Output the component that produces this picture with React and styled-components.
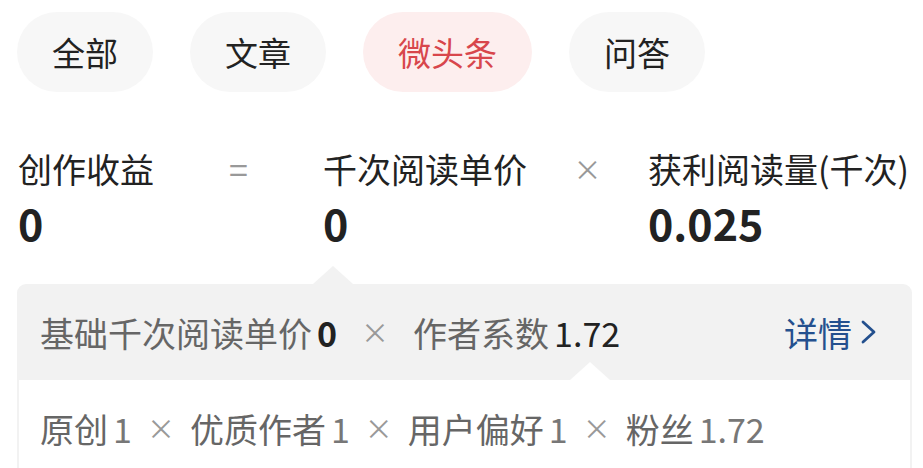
import React from 'react';
import styled, { createGlobalStyle } from 'styled-components';

const GlobalStyle = createGlobalStyle`
  html, body {
    margin: 0;
    padding: 0;
    background: #fff;
    overflow: hidden;
  }
  body {
    font-family: "Noto Sans CJK SC", "Noto Sans", sans-serif;
    color: #222;
  }
`;

const tabs = [
  { key: 'all', label: '全部' },
  { key: 'article', label: '文章' },
  { key: 'weitoutiao', label: '微头条' },
  { key: 'qa', label: '问答' },
];

const factors = [
  { name: '原创', value: '1' },
  { name: '优质作者', value: '1' },
  { name: '用户偏好', value: '1' },
  { name: '粉丝', value: '1.72' },
];

const App = () => {
  const active = 'weitoutiao';

  return (
    <>
      <GlobalStyle />
      <Page>
        <TabBar>
          {tabs.map(tab => (
            <Tab key={tab.key} active={tab.key === active}>
              {tab.label}
            </Tab>
          ))}
        </TabBar>

        <Formula>
          <Term>
            <Label>创作收益</Label>
            <Value>0</Value>
          </Term>
          <Operator width={169}>=</Operator>
          <Term>
            <Label>千次阅读单价</Label>
            <Value>0</Value>
          </Term>
          <Operator width={121} small>×</Operator>
          <Term>
            <Label>获利阅读量(千次)</Label>
            <Value>0.025</Value>
          </Term>
        </Formula>

        <Breakdown>
          <Caret left={296} color="#f2f2f2" />
          <BaseRow>
            <Line>
              基础千次阅读单价<Num strong>0</Num>
              <Times>×</Times>
              作者系数<Num dark>1.72</Num>
            </Line>
            <Detail>
              详情
              <svg width="22" height="30" viewBox="0 0 22 30">
                <polyline
                  points="5,5 16,15 5,25"
                  fill="none"
                  stroke="currentColor"
                  strokeWidth="2.8"
                  strokeLinecap="round"
                  strokeLinejoin="round"
                />
              </svg>
            </Detail>
          </BaseRow>
          <FactorPanel>
            <Caret left={551} color="#fff" />
            <Line>
              {factors.map((f, i) => (
                <React.Fragment key={f.name}>
                  {i > 0 && <Times small>×</Times>}
                  {f.name}
                  <Num>{f.value}</Num>
                </React.Fragment>
              ))}
            </Line>
          </FactorPanel>
        </Breakdown>
      </Page>
    </>
  );
};

const Page = styled.div`
  width: 923px;
  height: 468px;
  padding: 12px 0 0 17px;
  box-sizing: border-box;
  overflow: hidden;
`;

const TabBar = styled.div`
  display: flex;
  gap: 37px;
`;

const Tab = styled.div`
  height: 80px;
  padding: 0 35px;
  border-radius: 40px;
  display: flex;
  align-items: center;
  font-size: 33px;
  background: ${p => (p.active ? '#fdeeee' : '#f7f7f7')};
  color: ${p => (p.active ? '#d8464c' : '#222')};
`;

const Formula = styled.div`
  display: flex;
  align-items: flex-start;
  margin-top: 52px;
  margin-left: 1px;
  white-space: nowrap;
`;

const Term = styled.div`
  display: flex;
  flex-direction: column;
`;

const Label = styled.div`
  font-size: 34px;
  line-height: 50px;
  color: #222;
`;

const Value = styled.div`
  font-size: 43px;
  line-height: 56px;
  font-weight: 600;
  color: #222;
`;

const Operator = styled.div`
  width: ${p => p.width}px;
  flex-shrink: 0;
  text-align: center;
  font-size: ${p => (p.small ? 28 : 34)}px;
  line-height: 50px;
  color: #999;
`;

const Breakdown = styled.div`
  position: relative;
  margin: 34px 11px 0 0;
  background: #f2f2f2;
  border-radius: 9px;
  padding: 0 2px;
`;

const Caret = styled.div`
  position: absolute;
  left: ${p => p.left}px;
  top: -18px;
  width: 0;
  height: 0;
  border-left: 20px solid transparent;
  border-right: 20px solid transparent;
  border-bottom: 18px solid ${p => p.color};
`;

const BaseRow = styled.div`
  height: 96px;
  display: flex;
  align-items: center;
  justify-content: space-between;
  padding: 0 30px 0 21px;
`;

const Line = styled.div`
  display: flex;
  align-items: center;
  font-size: 34px;
  color: #666;
  white-space: nowrap;
`;

const Num = styled.span`
  margin-left: 5px;
  font-weight: ${p => (p.strong ? 700 : 400)};
  color: ${p => (p.strong || p.dark ? '#222' : '#777')};
`;

const Times = styled.span`
  margin: 0 ${p => (p.small ? 15 : 24)}px;
  font-size: 28px;
  color: #999;
`;

const Detail = styled.div`
  display: flex;
  align-items: center;
  gap: 6px;
  font-size: 34px;
  color: #24508e;
`;

const FactorPanel = styled.div`
  position: relative;
  height: 110px;
  background: #fff;
  padding: 14px 0 0 21px;
  box-sizing: border-box;
  display: flex;
  align-items: flex-start;
  ${Line} {
    height: 68px;
  }
`;

export default App;
